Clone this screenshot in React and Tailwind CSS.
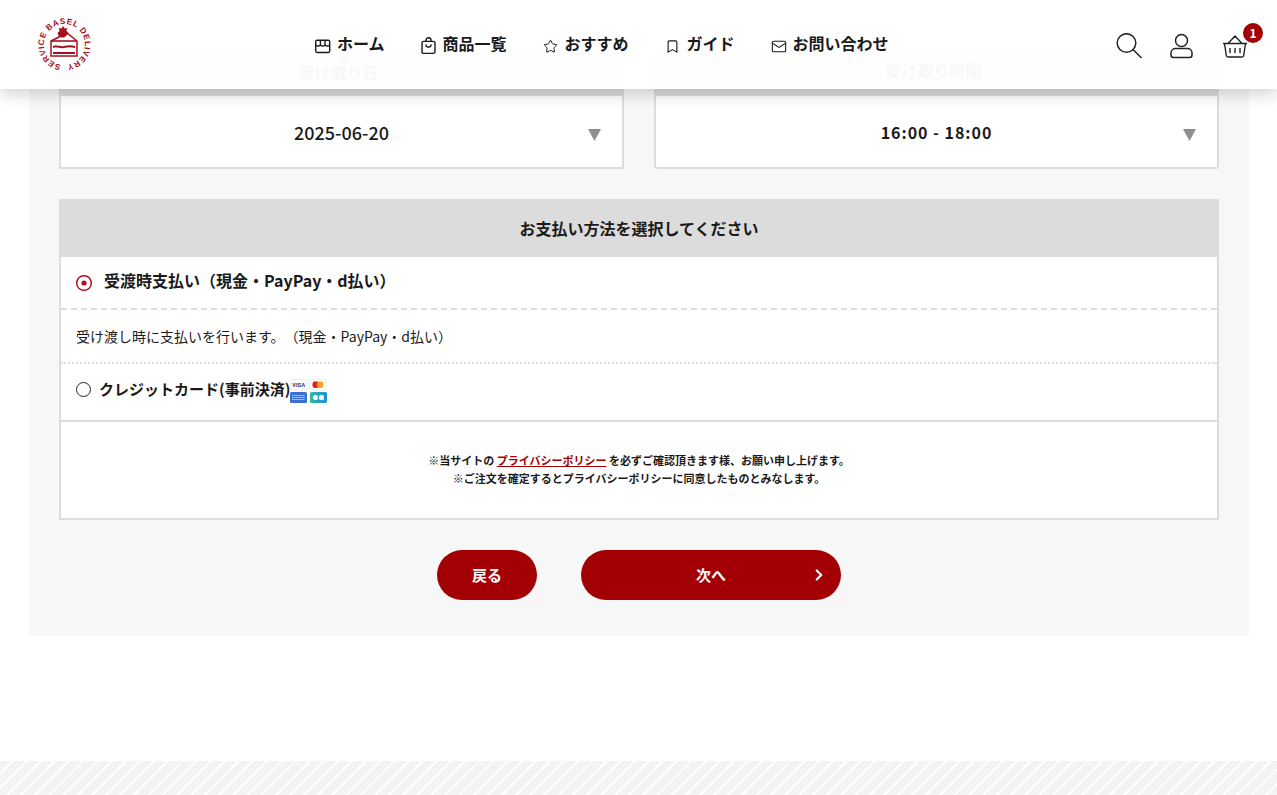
import React from "react";
import { Star, Bookmark, Mail, ChevronRight } from "lucide-react";

const jp = "font-['Noto_Sans_CJK_JP','Noto_Sans',sans-serif]";

const Logo = () => (
    <svg width="60" height="60" viewBox="0 0 60 60" className="shrink-0">
        <defs>
            <path id="logoRing" d="M25.900 49.700A20.500 20.500 0 1 1 29.400 50" />
        </defs>
        <text fontSize="8.2" fontWeight="700" fill="#a50f1c" fontFamily="Liberation Sans">
            <textPath href="#logoRing" textLength="122">SERVICE BASEL DELIVERY</textPath>
        </text>
        <path d="M16 26l16-8 10 8v15H16z" fill="#fff" stroke="#a50f1c" strokeWidth="1.500" />
        <path d="M16 26h26" stroke="#a50f1c" strokeWidth="1.600" />
        <path d="M18 31c4-1.500 7 1 11 0s7-1 11 0v2c-4-1-7-1-11 0s-7-1.500-11 0zM18 37h22v2H18z" fill="#a50f1c" />
        <path d="M22.500 18l2-2-.5-3 2.500.5 1.500-2.500 1.500 2.500 2.500-.5-.5 3 2 2-2 2.500-2.500 2h-3l-2.500-2z" fill="#a50f1c" />
    </svg>
);

const StoreIcon = () => (
    <svg width="16" height="16" viewBox="0 0 16 16" fill="none" stroke="#1a1a1a" strokeWidth="1.4">
        <rect x="0.700" y="2.200" width="14" height="12.300" rx="1.600" />
        <path d="M.7 6.800c1.100 1.600 3.600 1.600 4.700 0 1.100 1.600 3.500 1.600 4.600 0 1.100 1.600 3.600 1.600 4.700 0M5.400 2.200v4.600M10 2.200v4.600" />
    </svg>
);

const BagIcon = () => (
    <svg width="16" height="18" viewBox="0 0 16 18" fill="none" stroke="#1a1a1a" strokeWidth="1.4">
        <rect x="1" y="4.400" width="13" height="12" rx="1.600" />
        <path d="M5 4.400V3.200a2.500 2.500 0 0 1 5 0v1.200M4.900 7.600a2.600 2.600 0 0 0 5.200 0" />
    </svg>
);

const NavItem = ({ icon, label }) => (
    <a className="flex items-center gap-[6px] text-base font-bold text-[#1a1a1a] leading-none">
        <span className="flex w-4 h-[18px] items-center justify-center mt-[3px]">{icon}</span>
        <span className="-mt-[4px]">{label}</span>
    </a>
);

const Header = () => (
    <header className="absolute top-0 left-0 right-0 h-[89px] bg-white/[0.97] shadow-[0_5px_15px_rgba(0,0,0,0.18)] flex items-center pl-[35px]">
        <Logo />
        <nav className="flex items-center gap-[36px] ml-[220px]">
            <NavItem icon={<StoreIcon />} label="ホーム" />
            <NavItem icon={<BagIcon />} label="商品一覧" />
            <NavItem icon={<Star size={15} color="#1a1a1a" strokeWidth={1.6} />} label="おすすめ" />
            <NavItem icon={<Bookmark size={15} color="#1a1a1a" strokeWidth={1.8} />} label="ガイド" />
            <NavItem icon={<Mail size={17} color="#1a1a1a" strokeWidth={1.6} />} label="お問い合わせ" />
        </nav>
        <div className="ml-auto flex items-center gap-[28px] pr-[29px] mt-[3px]">
            <svg width="26" height="26" viewBox="0 0 26 26" fill="none" stroke="#222" strokeWidth="1.5">
                <circle cx="10.500" cy="10" r="9.300" />
                <path d="M17.500 17l7.500 7.500" strokeLinecap="round" />
            </svg>
            <svg width="24" height="26" viewBox="0 0 24 26" fill="none" stroke="#222" strokeWidth="1.5">
                <circle cx="11.500" cy="7.500" r="6" />
                <path d="M1 22v-2c0-2.800 2.200-4.500 4.500-4.500h12c2.300 0 4.500 1.700 4.500 4.500v2c0 1.600-1 2.500-2.500 2.500h-16C2 24.500 1 23.600 1 22z" />
            </svg>
            <div className="relative">
                <svg width="26" height="26" viewBox="0 0 26 26" fill="none" stroke="#222" strokeWidth="1.4" className="block">
                    <path d="M1 10.500h24M2.500 10.500l1.800 12c.1.900.7 1.500 1.600 1.500h14.200c.9 0 1.500-.6 1.600-1.500l1.800-12M6 10.500L13 3l7 7.500M8 15v5M13 15v5M18 15v5" />
                </svg>
                <span className="absolute -top-[10px] -right-[15px] flex items-center justify-center w-5 h-5 rounded-full bg-[#a30005] text-white text-xs font-bold leading-none">
                    1
                </span>
            </div>
        </div>
    </header>
);

const DateSelect = ({ label, value, valueClass, labelClass, boxClass }) => (
    <div className="flex-1">
        <div className={`h-[47px] bg-[#dcdcdc] flex justify-center text-base font-bold text-[#1a1a1a] leading-6 ${labelClass}`}>
            {label}
            <span className="text-[#a30005] text-xs leading-4 -mt-[1px]">*</span>
        </div>
        <div className={`h-[73px] bg-white border-2 border-t-0 border-[#dcdcdc] grid grid-cols-[1fr_auto_1fr] items-center text-[#1a1a1a] ${boxClass}`}>
            <span />
            <span className={valueClass}>{value}</span>
            <span className="justify-self-end pr-[21px]">
                <svg width="13" height="12" viewBox="0 0 13 12" className="block mt-[6px]">
                    <path d="M0 0h13L6.500 12z" fill="#8f8f8f" />
                </svg>
            </span>
        </div>
    </div>
);

const CardIcons = () => (
    <svg width="38" height="26" viewBox="0 0 38 26" className="mt-[5px]">
        <defs>
            <linearGradient id="cardTeal" x1="0" x2="1">
                <stop offset="0" stopColor="#35b8a6" />
                <stop offset="1" stopColor="#1f8fd6" />
            </linearGradient>
        </defs>
        <rect x="0.500" y="0.500" width="16.500" height="10.500" rx="1.500" fill="#fff" stroke="#eee" />
        <text x="8.700" y="7.800" fontSize="5.500" fontWeight="700" textAnchor="middle" fill="#1a2a6c" fontFamily="Liberation Sans">VISA</text>
        <rect x="19.500" y="0.500" width="17" height="10.500" rx="1.500" fill="#fff" stroke="#eee" />
        <circle cx="25.800" cy="5.700" r="3.400" fill="#e0261b" />
        <circle cx="30.200" cy="5.700" r="3.400" fill="#f79e1b" opacity="0.9" />
        <rect y="13" width="17" height="11" rx="1.500" fill="#3a6fd8" />
        <path d="M2 16.500h13M2 18.500h13M2 20.500h13" stroke="#cfe0fb" strokeWidth="0.9" strokeDasharray="1.500 0.600" />
        <rect x="20" y="13" width="17" height="11" rx="1.500" fill="url(#cardTeal)" />
        <rect x="23" y="16" width="5" height="5" rx="2.500" fill="#fff" />
        <rect x="29" y="16" width="5" height="5" rx="1.500" fill="#e6f6fb" />
    </svg>
);

const PaymentBox = () => (
    <section className="mt-[30px] border-x-2 border-b-2 border-[#dcdcdc] bg-white">
        <h2 className="-mx-[2px] h-[58px] bg-[#dcdcdc] flex items-center justify-center text-base font-bold text-[#1a1a1a]">
            お支払い方法を選択してください
        </h2>
        <div className="h-[53px] border-b-2 border-dashed border-[#dcdcdc] flex items-center pl-[14px] pb-[5px]">
            <svg width="18" height="18" viewBox="0 0 18 18" className="mt-[5px]">
                <circle cx="9" cy="9" r="7.300" fill="none" stroke="#b01020" strokeWidth="1.500" />
                <circle cx="9" cy="9" r="2.600" fill="#b01020" />
            </svg>
            <span className="ml-[11px] text-base font-bold text-[#1a1a1a]">
                受渡時支払い（現金・PayPay・d払い）
            </span>
        </div>
        <div className="h-[54px] border-b-2 border-dotted border-[#dcdcdc] flex items-center pl-[15px] text-sm text-[#1a1a1a]">
            受け渡し時に支払いを行います。（現金・PayPay・d払い）
        </div>
        <div className="h-[58px] border-b-2 border-[#dcdcdc] flex items-center pl-[15px] pb-[6px]">
            <span className="w-[15px] h-[15px] rounded-full border border-[#222] bg-white" />
            <span className="ml-[8px] text-[15px] font-bold text-[#1a1a1a]">クレジットカード(事前決済)</span>
            <CardIcons />
        </div>
        <div className="h-[96px] flex flex-col items-center justify-center text-[11px] leading-[18px] font-bold text-[#1a1a1a] pb-[2px]">
            <p>
                ※当サイトの <a className="text-[#a30005] underline">プライバシーポリシー</a> を必ずご確認頂きます様、お願い申し上げます。
            </p>
            <p>※ご注文を確定するとプライバシーポリシーに同意したものとみなします。</p>
        </div>
    </section>
);

const App = () => {
    return (
        <div className={`relative h-[795px] overflow-hidden bg-white flex flex-col [text-spacing-trim:space-all] ${jp}`}>
            <Header />
            <main className="mx-[29px] mr-[28px] mt-[19px] bg-[#f7f7f7] px-[30px] pt-[30px] pb-[36px]">
                <div className="flex gap-[30px]">
                    <DateSelect
                        label="受け取り日"
                        value="2025-06-20"
                        valueClass="text-lg font-medium"
                        labelClass="pt-[11px]"
                    />
                    <DateSelect
                        label="受け取り時間"
                        value="16:00 - 18:00"
                        valueClass="text-base font-bold tracking-[0.06em]"
                        labelClass="pt-[9px]"
                        boxClass="rounded-b-[3px]"
                    />
                </div>
                <PaymentBox />
                <div className="mt-[30px] flex justify-center gap-[44px]">
                    <a className="w-[100px] h-[50px] rounded-full bg-[#a30005] text-white text-[15px] font-bold flex items-center justify-center">
                        戻る
                    </a>
                    <a className="w-[260px] h-[50px] rounded-full bg-[#a30005] text-white text-[15px] font-bold grid grid-cols-[1fr_auto_1fr] items-center">
                        <span />
                        <span>次へ</span>
                        <ChevronRight size={18} strokeWidth={3} className="justify-self-end mr-[13px]" />
                    </a>
                </div>
            </main>
            <footer className="mt-auto h-[34px] bg-[repeating-linear-gradient(135deg,#f3f3f3_0,#f3f3f3_8px,#fff_8px,#fff_10px)]" />
        </div>
    );
};

export default App;
